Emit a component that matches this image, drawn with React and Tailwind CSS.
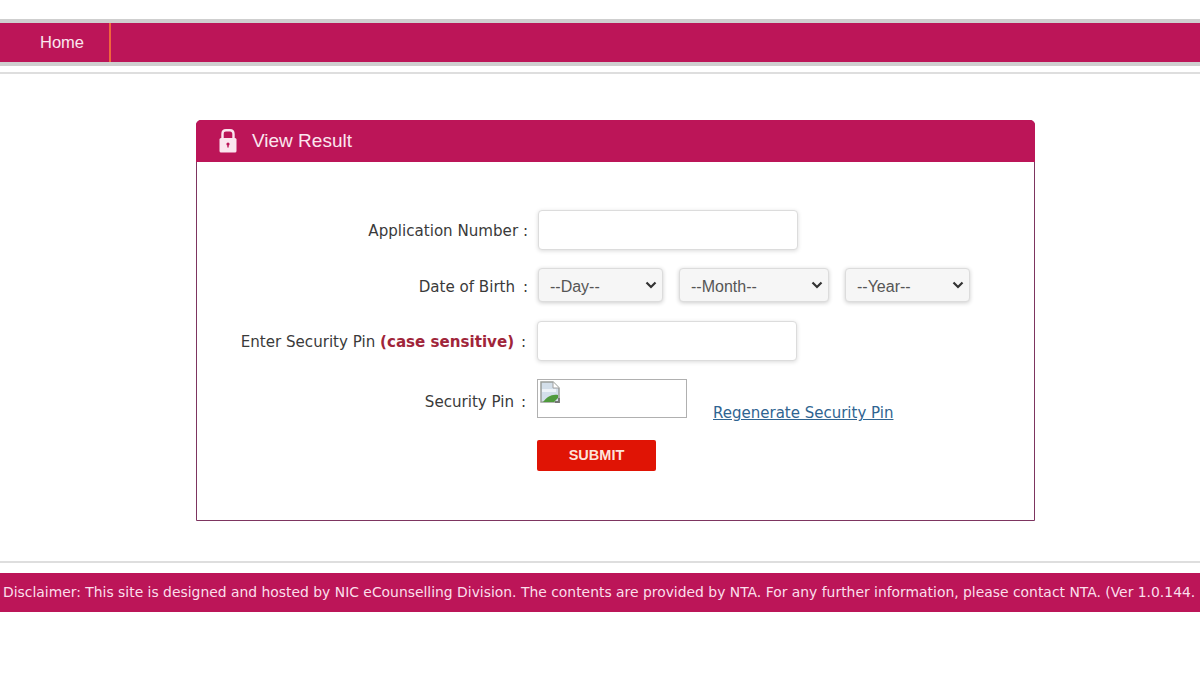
import React from "react";

const fieldClass = "h-[40px] rounded-[4px] border border-[#dcdcdc] bg-white shadow-[0_1px_4px_rgba(0,0,0,0.15)]";

const Chevron = () => (
  <svg width="12" height="8" viewBox="0 0 12 8" className="shrink-0">
    <path d="M1.5 1.5 L6 6 L10.5 1.5" fill="none" stroke="#333" strokeWidth="2.2" />
  </svg>
);

const FakeSelect = ({ label, width }) => (
  <div
    className={`${width} h-[34px] rounded-[4px] border border-[#dcdcdc] bg-[#f6f6f6] shadow-[0_1px_4px_rgba(0,0,0,0.2)] flex items-center justify-between pl-[11px] pr-[5px] text-[16px] text-[#555] font-['Liberation_Sans',sans-serif]`}
  >
    <span className="pt-[3px]">{label}</span>
    <Chevron />
  </div>
);

// broken image placeholder, same as the browser draws it
const BrokenImage = () => (
  <svg width="22" height="23" viewBox="0 0 22 23" className="ml-[1px] mt-[1px]">
    <path d="M2 1 H14 L20 7 V21 H2 Z" fill="#d3dfea" stroke="#9a9f9a" strokeWidth="1.5" />
    <path d="M14 1 V7 H20" fill="#fff" stroke="#a0a0a0" strokeWidth="1" />
    <path d="M3 11 H17 V8 L3 8 Z" fill="#eef3f8" />
    <path d="M4 21 C8 16 12 13 19 14 V17 L15 21 Z" fill="#4f9a3c" />
    <path d="M16 21 H20 V17" fill="none" stroke="#777" strokeWidth="1.8" />
  </svg>
);

const App = () => {
  return (
    <div className="w-[1200px] h-[675px] overflow-hidden bg-white font-['DejaVu_Sans',sans-serif]">
      <div className="pt-[19px]">
        <div className="h-[47px] border-y-4 border-[#cfcfcf] bg-[#bc1558] flex items-stretch">
          <div className="w-[111px] border-r-2 border-[#f0663c] pl-[40px] pb-[1px] flex items-center text-[16.5px] font-['Liberation_Sans',sans-serif] text-[#fbe6ef]">
            Home
          </div>
        </div>
      </div>
      <div className="mt-[6px] h-[2px] bg-[#dedede]" />

      <div className="mt-[46px] ml-[196px] w-[839px] h-[401px] rounded-t-[5px] border border-[#7d3560] flex flex-col">
        <div className="h-[42px] -mx-px -mt-px rounded-t-[5px] bg-[#bc1558] flex items-center pl-[23px]">
          <svg width="18" height="24" viewBox="0 0 18 24">
            <path d="M3.5 11 V5 Q3.5 1.2 7 1.2 H11 Q14.5 1.2 14.5 5 V11" fill="none" stroke="#fbe6ef" strokeWidth="2.4" />
            <rect x="0.5" y="9" width="17" height="14.5" rx="1.5" fill="#fbe6ef" />
            <circle cx="9" cy="15" r="1.6" fill="#bc1558" />
            <rect x="8.3" y="15" width="1.4" height="3.5" fill="#bc1558" />
          </svg>
          <span className="ml-[15px] text-[19px] font-['Liberation_Sans',sans-serif] text-[#fbe6ef]">View Result</span>
        </div>

        <div className="pt-[48px] text-[15.1px] text-[#3a3a3a]">
          <div className="flex items-center h-[40px]">
            <div className="w-[331px] text-right pt-[2px]">Application Number :</div>
            <div className={`${fieldClass} ml-[10px] w-[260px]`} />
          </div>

          <div className="flex items-center h-[34px] mt-[18px]">
            <div className="w-[331px] text-right pt-[4px]">
              Date of Birth <span className="ml-[3px]">:</span>
            </div>
            <div className="ml-[10px] flex gap-[16px]">
              <FakeSelect label="--Day--" width="w-[125px]" />
              <FakeSelect label="--Month--" width="w-[150px]" />
              <FakeSelect label="--Year--" width="w-[125px]" />
            </div>
          </div>

          <div className="flex items-center h-[40px] mt-[19px]">
            <div className="w-[330px] text-right pt-[2px] pr-[1px]">
              Enter Security Pin <span className="font-bold text-[#a0253a]">(case sensitive)</span> <span className="ml-[2px]">:</span>
            </div>
            <div className={`${fieldClass} ml-[10px] w-[260px]`} />
          </div>

          <div className="flex h-[39px] mt-[18px]">
            <div className="w-[330px] text-right leading-[46px] pr-[1px]">
              Security Pin <span className="ml-[2px]">:</span>
            </div>
            <div className="ml-[10px] w-[150px] h-[39px] border border-[#b0b0b0]">
              <BrokenImage />
            </div>
            <a className="ml-[26px] mt-[23px] text-[15px] leading-[22px] text-[#2f6491] underline">Regenerate Security Pin</a>
          </div>

          <div className="mt-[22px] ml-[340px] w-[119px] h-[31px] rounded-[2px] bg-[#e01405] flex items-center justify-center text-[14.5px] font-bold font-['Liberation_Sans',sans-serif] text-[#fde3da]">
            SUBMIT
          </div>
        </div>
      </div>

      <div className="mt-[40px] h-[2px] bg-[#dedede]" />
      <div className="mt-[10px] h-[39px] bg-[#bc1558] flex items-center pl-[3px] whitespace-nowrap overflow-hidden text-[13.9px] text-[#fbdfeb]">
        Disclaimer: This site is designed and hosted by NIC eCounselling Division. The contents are provided by NTA. For any further information, please contact NTA. (Ver 1.0.144.
      </div>
    </div>
  );
};

export default App;
